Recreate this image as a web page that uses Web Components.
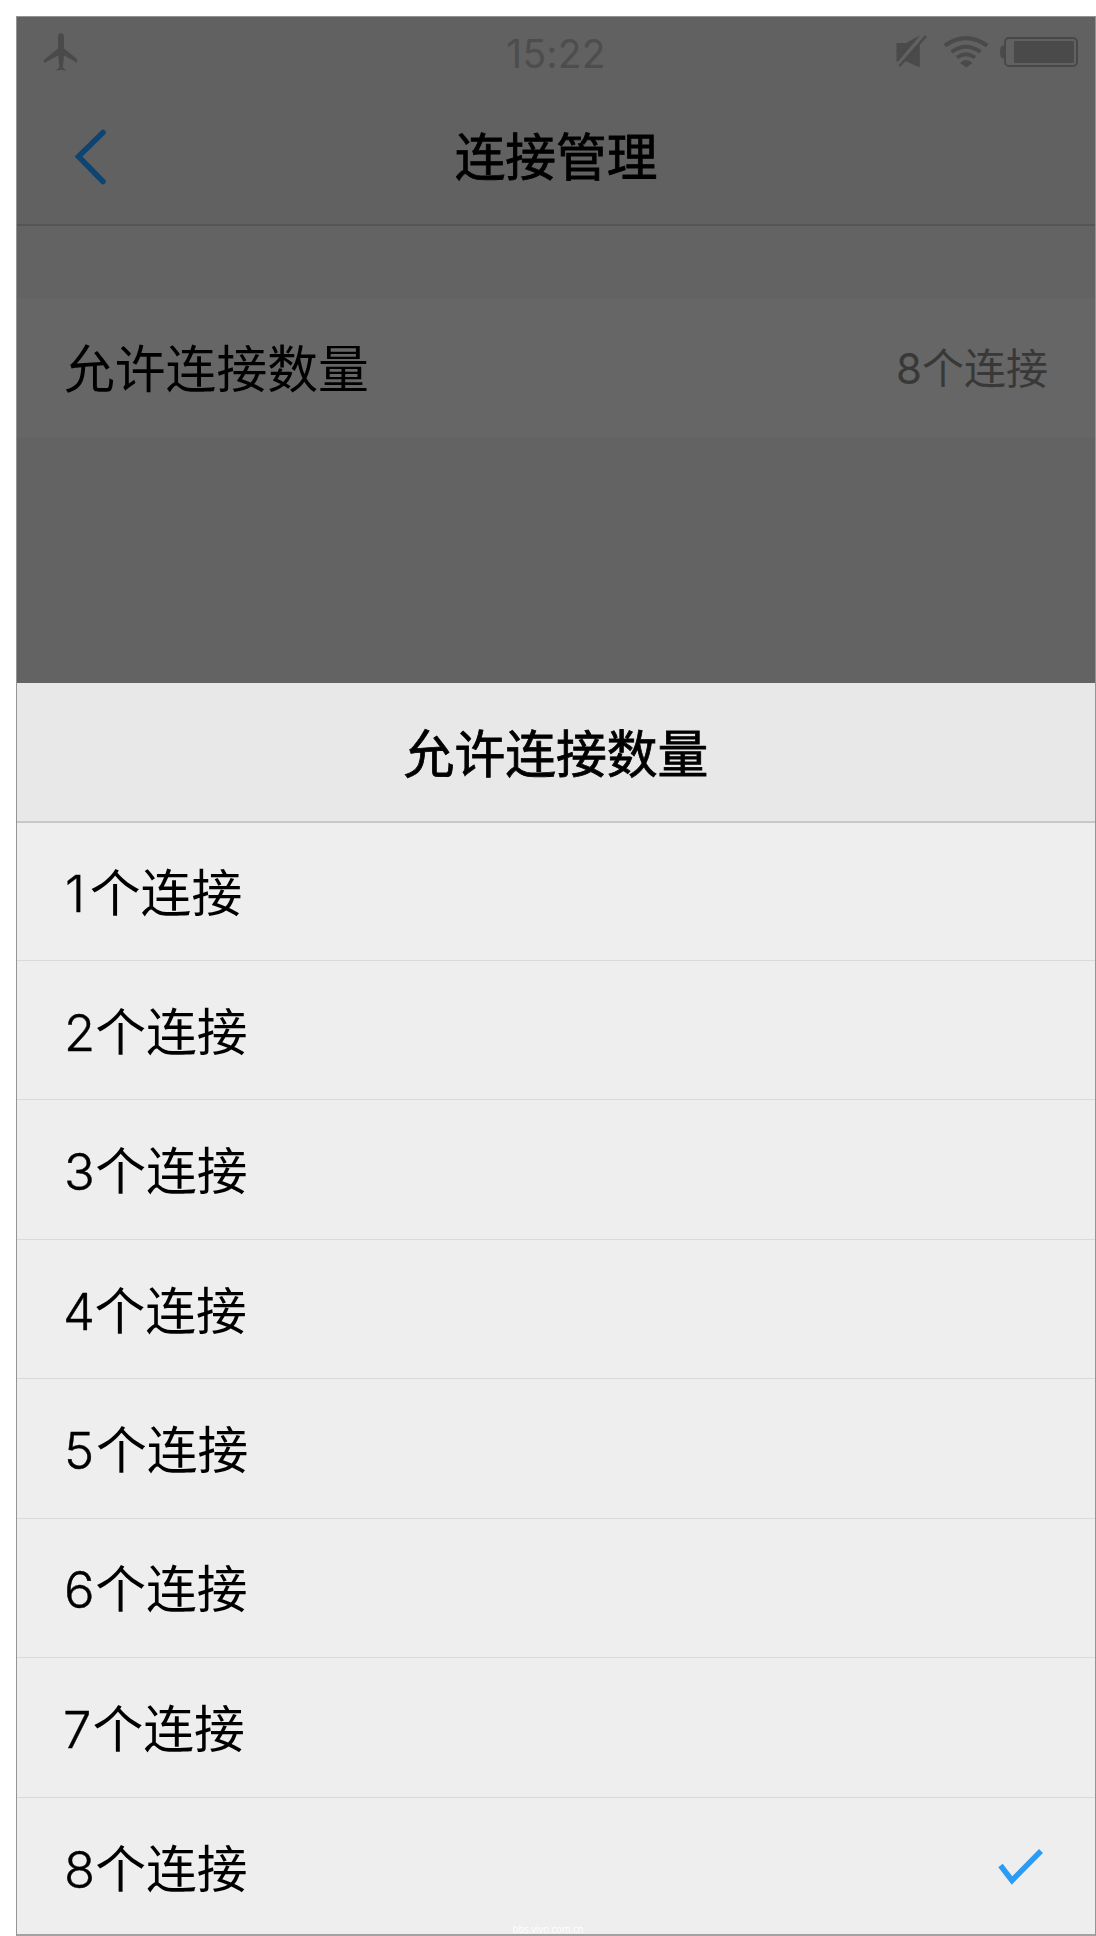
<!DOCTYPE html>
<html lang="zh-CN">
<head>
<meta charset="utf-8">
<title>连接管理</title>
<style>
html,body{margin:0;padding:0;background:#fff}
body{padding:16px 0 0 16px;width:1080px;height:1920px;overflow:hidden;font-family:Inter,"Noto Sans CJK SC",sans-serif;color:#000}
</style>
</head>
<body>
<phone-screen>
  <status-bar time="15:22"></status-bar>
  <nav-bar>连接管理</nav-bar>
  <setting-row value="8个连接">允许连接数量</setting-row>
  <option-sheet heading="允许连接数量">
    <option-row count="1">个连接</option-row>
    <option-row count="2">个连接</option-row>
    <option-row count="3">个连接</option-row>
    <option-row count="4">个连接</option-row>
    <option-row count="5">个连接</option-row>
    <option-row count="6">个连接</option-row>
    <option-row count="7">个连接</option-row>
    <option-row count="8" selected>个连接</option-row>
  </option-sheet>
  <span slot="mark">bbs.vivo.com.cn</span>
</phone-screen>
<script>
const define = (name, html, setup) => customElements.define(name, class extends HTMLElement {
  connectedCallback() {
    if (this.shadowRoot) return;
    this.attachShadow({mode: 'open'}).innerHTML = html;
    if (setup) setup(this, this.shadowRoot);
  }
});

define('phone-screen', `<style>
:host{display:flex;flex-direction:column;position:relative;box-sizing:border-box;width:1080px;height:1920px;border:1px solid #949494;border-bottom:2px solid #a2a2a2;background:#636363;overflow:hidden}
.mark{position:absolute;left:0;right:16px;bottom:-2px;text-align:center;font:11.5px/14px "Noto Sans",sans-serif;transform:scaleX(.82);color:#fff}
</style><slot></slot><div class="mark"><slot name="mark"></slot></div>`);

define('status-bar', `<style>
:host{display:flex;align-items:center;justify-content:space-between;height:74px;flex:none;background:#616161;color:#4d4d4d}
.side{flex:1;display:flex;height:74px}
svg{display:block}
.time{font-size:39px;line-height:74px;letter-spacing:.2px}
.right{justify-content:flex-end}
</style>
<div class="side"><svg width="100" height="74" viewBox="17 17 100 74"><path fill="#4a4a4a" d="M58 37Q58 33.3 61 33.3T64 37V48.5L76.5 58.5Q78 60 77 62.8L64 55.5L62.8 67.2L66.5 70.8L61 69.8L55.500 70.8L59.400 67.200L58.200 55.500L44.500 62.800Q43 60.500 45 59L58 48.500Z"/></svg></div>
<div class="time"></div>
<div class="side right"><svg width="210" height="74" viewBox="885 17 210 74">
<g fill="#4a4a4a"><path d="M896.500 43H906L920 35.500L898 61.500H896.500Z"/><path d="M919.800 42V67.500L906.500 61.500H904Z"/></g>
<path d="M899.500 66L926 36" stroke="#4a4a4a" stroke-width="2.500"/>
<g fill="none" stroke="#4a4a4a" stroke-width="4"><path d="M944.800 45.700Q966 30.500 987.200 45.700"/><path d="M951.500 52Q966 41.500 980.500 52"/><path d="M957 57.500Q966 51 975 57.500"/></g>
<path fill="#4a4a4a" d="M960 63Q966 57 972.500 63L966.300 67.500Z"/>
<rect x="1005" y="38" width="72" height="28" rx="4" fill="none" stroke="#484848" stroke-width="2"/>
<rect x="1014" y="41" width="60" height="22" rx="1" fill="#4a4a4a"/><path fill="#4a4a4a" d="M1004 45.500H1002Q1000 47 1000 52T1002 58.500H1004Z"/>
</svg></div>`, (h, r) => r.querySelector('.time').textContent = h.getAttribute('time'));

define('nav-bar', `<style>
:host{display:flex;height:133px;flex:none;border-bottom:2px solid #555;background:#616161}
.side{flex:1}
svg{display:block}
.title{font-size:50.7px;line-height:134px;-webkit-text-stroke:.8px #000}
</style><div class="side"><svg width="110" height="132" viewBox="17 91 110 132"><path d="M103 132.500L78.500 156.500L103 181.500" fill="none" stroke="#0d4472" stroke-width="5.500" stroke-linecap="round"/></svg></div><div class="title"><slot></slot></div><div class="side"></div>`);

define('setting-row', `<style>
:host{display:flex;justify-content:space-between;height:138px;flex:none;margin:73px 0 246px;padding:0 47px;background:#666;font-size:50.8px;line-height:142px}
.value{font-size:42px;color:#383838;line-height:140px}
</style><slot></slot><span class="value"></span>`, (h, r) => r.querySelector('.value').textContent = h.getAttribute('value'));

define('option-sheet', `<style>
:host{display:block;flex:none;background:#eee}
.head{height:138px;border-bottom:2px solid #c8c8c8;background:#e8e8e8;text-align:center;font-size:50.8px;line-height:144px;-webkit-text-stroke:.8px #000}
::slotted(option-row:first-child){height:138px}
</style><div class="head"></div><slot></slot>`, (h, r) => r.querySelector('.head').textContent = h.getAttribute('heading'));

define('option-row', `<style>
:host{display:flex;align-items:center;justify-content:space-between;box-sizing:border-box;height:139.45px;border-bottom:1px solid #dadada;padding:0 47px;font-size:50.8px;line-height:138px}
:host(:last-child){border-bottom:0}
.label{padding-top:5px}
.count{display:inline-block;width:31.2px;line-height:1;font-weight:300;-webkit-text-stroke:.4px #000}
:host([count="1"]) .count{width:25.8px;text-indent:1px}
:host([count="4"]) .count{width:30.4px;text-indent:-1px}
:host([count="5"]) .count{width:32px}
:host([count="7"]) .count{width:28.500px;text-indent:-1px}
svg{display:none}
:host([selected]) svg{display:block}
</style><span class="label"><span class="count"></span><slot></slot></span><svg width="50" height="50" viewBox="998 1842 50 50"><path d="M1000.500 1865.500L1012 1880.500L1041 1851" fill="none" stroke="#2b9bf4" stroke-width="5.500"/></svg>`, (h, r) => r.querySelector('.count').textContent = h.getAttribute('count'));
</script>
</body>
</html>
